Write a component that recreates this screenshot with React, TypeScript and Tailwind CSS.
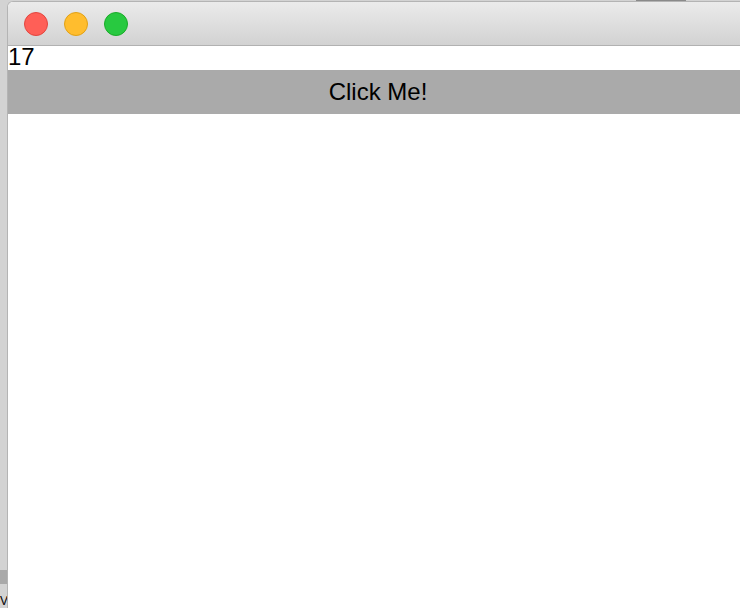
import React, { useState } from "react";

const TrafficLight = ({ fill, edge }: { fill: string; edge: string }) => (
    <div className={`h-[24px] w-[24px] rounded-full border ${fill} ${edge}`} />
);

export default function App() {
    const [count, setCount] = useState(17);

    return (
        <div className="relative h-[608px] w-[740px] overflow-hidden bg-[#d3d3d3] font-['Liberation_Sans',Arial,sans-serif]">
            {/* desktop bits peeking out from behind the window */}
            <div className="absolute left-[636px] top-0 h-[2px] w-[50px] bg-[#8a8a8a]" />
            <div className="absolute left-0 top-[570px] h-[14px] w-[7px] bg-[#a9a9a9]" />
            <div className="absolute left-0 top-[594px] text-[12px] leading-[14px] text-black">V</div>

            <div className="absolute left-[7px] top-[1px] flex h-[640px] w-[742px] flex-col overflow-hidden rounded-t-[6px] border-l border-t border-[#b4b4b4] bg-white">
                <div className="flex h-[44px] shrink-0 items-center gap-[16px] border-b border-[#b1b1b1] bg-gradient-to-b from-[#ebebeb] to-[#d2d2d2] pl-[16px]">
                    <TrafficLight fill="bg-[#ff5f57]" edge="border-[#e2463f]" />
                    <TrafficLight fill="bg-[#ffbd2e]" edge="border-[#e1a116]" />
                    <TrafficLight fill="bg-[#28c940]" edge="border-[#1aab29]" />
                </div>
                <div className="h-[24px] text-[24px] leading-[22px] text-black">{count}</div>
                <button
                    className="h-[44px] w-[740px] bg-[#aaaaaa] text-[24px] text-black"
                    onClick={() => setCount((c) => c + 1)}
                >
                    Click Me!
                </button>
            </div>
        </div>
    );
}
